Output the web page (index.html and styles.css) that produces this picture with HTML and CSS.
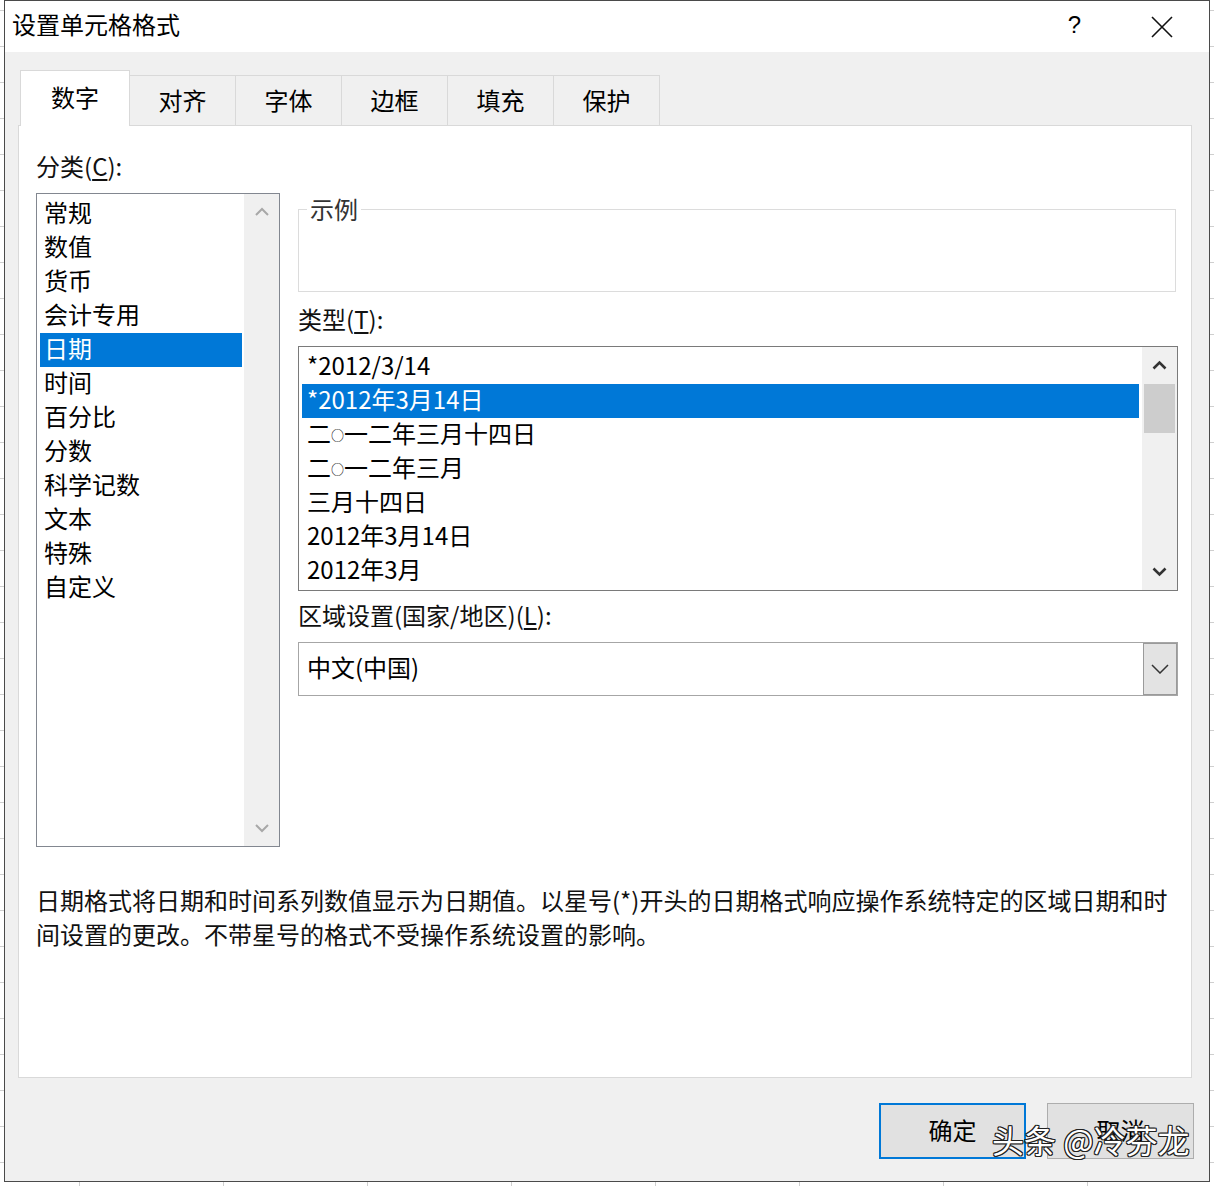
FILE: index.html
```html
<!DOCTYPE html>
<html lang="zh-CN">
<head>
    <meta charset="UTF-8">
    <title>设置单元格格式</title>
    <link rel="stylesheet" href="styles.css">
</head>
<body>
    <div class="desk">
        <div class="dialog">
            <div class="titlebar">
                <span class="title">设置单元格格式</span>
                <span class="help">?</span>
                <svg class="close" width="22" height="22" viewBox="0 0 22 22">
                    <path d="M1 1 L21 21 M21 1 L1 21" stroke="#111" stroke-width="1.6" fill="none"/>
                </svg>
            </div>

            <div class="dlg-body">
                <div class="tabs">
                    <div class="tab active">数字</div>
                    <div class="tab">对齐</div>
                    <div class="tab">字体</div>
                    <div class="tab">边框</div>
                    <div class="tab">填充</div>
                    <div class="tab">保护</div>
                </div>

                <div class="panel">
                    <div class="cols">
                        <div class="left-col">
                            <div class="label">分类(<u>C</u>):</div>
                            <div class="listbox cat-list">
                                <div class="items">
                                    <div class="item">常规</div>
                                    <div class="item">数值</div>
                                    <div class="item">货币</div>
                                    <div class="item">会计专用</div>
                                    <div class="item selected">日期</div>
                                    <div class="item">时间</div>
                                    <div class="item">百分比</div>
                                    <div class="item">分数</div>
                                    <div class="item">科学记数</div>
                                    <div class="item">文本</div>
                                    <div class="item">特殊</div>
                                    <div class="item">自定义</div>
                                </div>
                                <div class="vscroll light">
                                    <svg class="arrow" width="14" height="9" viewBox="0 0 14 9"><path d="M1 8 L7 2 L13 8" stroke="#a8a8a8" stroke-width="2" fill="none"/></svg>
                                    <div class="track"></div>
                                    <svg class="arrow" width="14" height="9" viewBox="0 0 14 9"><path d="M1 1 L7 7 L13 1" stroke="#a8a8a8" stroke-width="2" fill="none"/></svg>
                                </div>
                            </div>
                        </div>

                        <div class="right-col">
                            <fieldset class="sample">
                                <legend>示例</legend>
                                <div class="sample-body"></div>
                            </fieldset>

                            <div class="label gap-top">类型(<u>T</u>):</div>
                            <div class="listbox type-list">
                                <div class="items">
                                    <div class="item">*2012/3/14</div>
                                    <div class="item selected">*2012年3月14日</div>
                                    <div class="item">二<span class="circ">○</span>一二年三月十四日</div>
                                    <div class="item">二<span class="circ">○</span>一二年三月</div>
                                    <div class="item">三月十四日</div>
                                    <div class="item">2012年3月14日</div>
                                    <div class="item">2012年3月</div>
                                </div>
                                <div class="vscroll">
                                    <svg class="arrow" width="15" height="10" viewBox="0 0 15 10"><path d="M1.5 8.5 L7.5 2.5 L13.5 8.5" stroke="#333" stroke-width="2.6" fill="none"/></svg>
                                    <div class="track"><div class="thumb"></div></div>
                                    <svg class="arrow" width="15" height="10" viewBox="0 0 15 10"><path d="M1.5 1.5 L7.5 7.5 L13.5 1.5" stroke="#333" stroke-width="2.6" fill="none"/></svg>
                                </div>
                            </div>

                            <div class="label gap-top2">区域设置(国家/地区)(<u>L</u>):</div>
                            <div class="combo">
                                <span class="combo-text">中文(中国)</span>
                                <div class="combo-btn">
                                    <svg width="18" height="10" viewBox="0 0 18 10"><path d="M1 1 L9 9 L17 1" stroke="#333" stroke-width="1.5" fill="none"/></svg>
                                </div>
                            </div>
                        </div>
                    </div>

                    <p class="desc">日期格式将日期和时间系列数值显示为日期值。以星号(*)开头的日期格式响应操作系统特定的区域日期和时间设置的更改。不带星号的格式不受操作系统设置的影响。</p>
                </div>

                <div class="buttons">
                    <button class="btn default">确定</button>
                    <button class="btn">取消</button>
                </div>

                <div class="watermark">头条 @冷芬龙</div>
            </div>
        </div>
    </div>
</body>
</html>
```

FILE: styles.css
```css
body {
    margin: 0;
    font-family: "Noto Sans CJK SC", "Microsoft YaHei", sans-serif;
    color: #000;
    background-color: #fff;
    background-image:
        repeating-linear-gradient(to bottom, transparent 0 10px, #cfcfcf 10px 11px, transparent 11px 36px),
        repeating-linear-gradient(to right, transparent 0 79px, #cfcfcf 79px 80px, transparent 80px 144px);
}

.desk {
    padding-left: 4px;
}

.dialog {
    width: 1206px;
    height: 1182px;
    box-sizing: border-box;
    border: 1px solid #4a4a4a;
    background: #f0f0f0;
    display: flex;
    flex-direction: column;
}

/* title bar */
.titlebar {
    height: 51px;
    background: #fff;
    display: flex;
    align-items: center;
    padding: 0 36px 0 7px;
}
.title {
    font-size: 24px;
    line-height: 30px;
    margin-top: -5px;
}
.help {
    margin-left: auto;
    margin-right: 70px;
    font-size: 24px;
    line-height: 30px;
    margin-top: -3px;
    font-family: "Liberation Sans", sans-serif;
}
.close {
    display: block;
}

/* body */
.dlg-body {
    flex: 1;
    position: relative;
    padding: 18px 17px 0 13px;
}

.tabs {
    display: flex;
    align-items: flex-end;
    margin-left: 2px;
    margin-bottom: -1px;
    position: relative;
    z-index: 1;
}
.tab {
    width: 107px;
    height: 50px;
    box-sizing: border-box;
    margin-left: -1px;
    margin-bottom: 1px;
    border: 1px solid #d9d9d9;
    border-bottom: none;
    background: #f0f0f0;
    display: flex;
    align-items: center;
    justify-content: center;
    font-size: 24px;
    padding-bottom: 2px;
}
.tab.active {
    width: 110px;
    height: 56px;
    margin-left: 0;
    margin-bottom: 0;
    background: #fff;
    padding-bottom: 4px;
}
.tab.active + .tab {
    margin-left: -1px;
}

.panel {
    width: 1174px;
    height: 953px;
    box-sizing: border-box;
    background: #fff;
    border: 1px solid #d9d9d9;
    padding: 27px 13px 0 17px;
}

.cols {
    display: grid;
    grid-template-columns: 244px 880px;
    column-gap: 18px;
}

.label {
    font-size: 24px;
    line-height: 26px;
    height: 30px;
    margin-bottom: 10px;
    color: #111;
}
.label u {
    text-underline-offset: 3px;
}
.gap-top {
    margin-top: 14px;
}
.gap-top2 {
    margin-top: 11px;
}

/* list boxes */
.listbox {
    display: flex;
    box-sizing: border-box;
    background: #fff;
}
.items {
    flex: 1;
    padding: 3px 2px 3px 3px;
}
.item {
    height: 34px;
    box-sizing: border-box;
    line-height: 30px;
    font-size: 24px;
    padding-left: 4px;
    white-space: nowrap;
}
.item.selected {
    background: #0078d7;
    color: #fff;
}
.circ {
    font-size: 13px;
    vertical-align: 3px;
}

.cat-list {
    height: 654px;
    border: 1px solid #828790;
}

.type-list {
    height: 245px;
    border: 1px solid #7a7a7a;
}
.type-list .items {
    padding: 3px 3px 3px 3px;
}
.type-list .item {
    padding-left: 5px;
}

.vscroll {
    width: 35px;
    background: #f0f0f0;
    display: flex;
    flex-direction: column;
    align-items: center;
}
.vscroll .arrow {
    margin: 13px 0;
    flex: none;
}
.vscroll .track {
    flex: 1;
    align-self: stretch;
}
.type-list .vscroll .arrow:first-child {
    margin: 13px 0 14px;
}
.thumb {
    height: 49px;
    margin: 0 2px;
    background: #cdcdcd;
}

/* sample */
.sample {
    margin: 41px 2px 0 0;
    padding: 0;
    border: 1px solid #dcdcdc;
    min-width: 0;
}
.sample legend {
    margin-left: 8px;
    padding: 0 3px;
    font-size: 24px;
    line-height: 30px;
    color: #333;
}
.sample-body {
    height: 67px;
}

/* combo */
.combo {
    height: 54px;
    box-sizing: border-box;
    border: 1px solid #a6a6a6;
    background: #fff;
    display: flex;
    align-items: stretch;
}
.combo-text {
    flex: 1;
    font-size: 24px;
    line-height: 48px;
    padding-left: 8px;
}
.combo-btn {
    width: 34px;
    box-sizing: border-box;
    border: 1px solid #9a9a9a;
    background: #e3e3e3;
    display: flex;
    align-items: center;
    justify-content: center;
}

.desc {
    margin: 36px 0 0;
    width: 1140px;
    font-size: 24px;
    line-height: 34px;
    color: #111;
}

/* buttons */
.buttons {
    display: flex;
    justify-content: flex-end;
    gap: 21px;
    margin-top: 25px;
    margin-right: -2px;
}
.btn {
    width: 147px;
    height: 56px;
    box-sizing: border-box;
    background: #e1e1e1;
    border: 1px solid #adadad;
    font-family: "Noto Sans CJK SC", sans-serif;
    font-size: 24px;
    color: #000;
    padding: 0 0 3px;
}
.btn.default {
    border: 2px solid #0078d7;
}

.watermark {
    position: absolute;
    left: 987px;
    top: 1067px;
    font-size: 32px;
    line-height: 40px;
    color: #fff;
    white-space: nowrap;
    text-shadow: 1px 1px 0 #222, -1px -1px 0 #222, 1px -1px 0 #222, -1px 1px 0 #222,
                 0 1px 0 #222, 0 -1px 0 #222, 1px 0 0 #222, -1px 0 0 #222;
}
```
